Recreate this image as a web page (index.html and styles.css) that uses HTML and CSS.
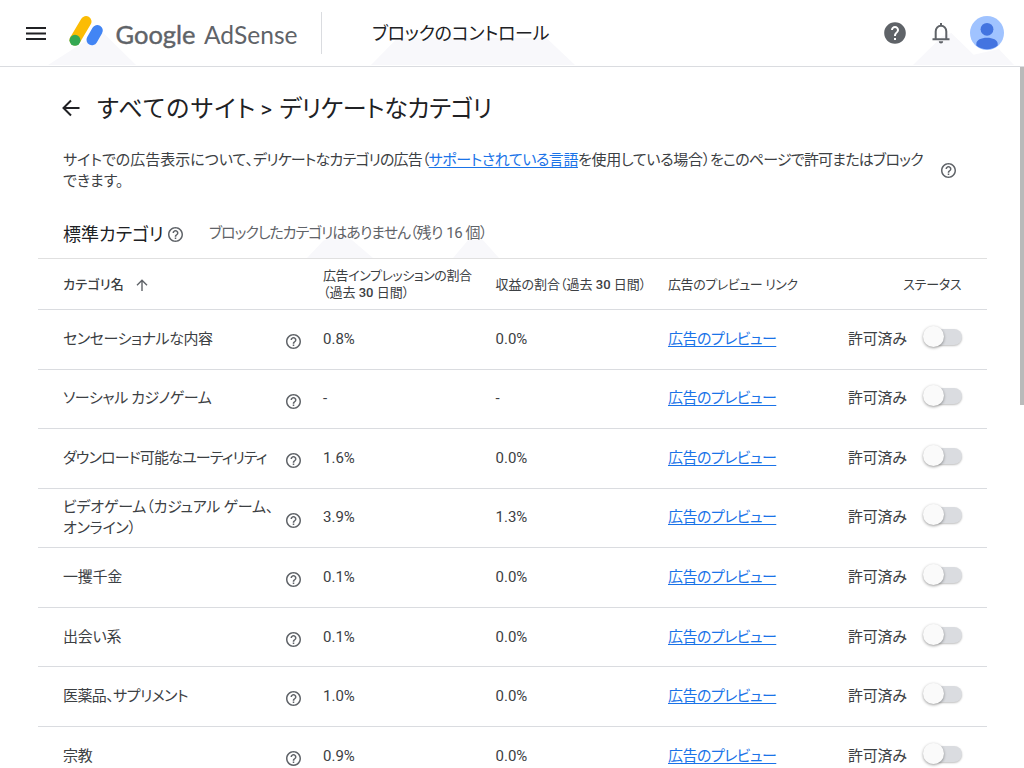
FILE: index.html
```html
<!DOCTYPE html>
<html lang="ja">
<head>
<meta charset="utf-8">
<title>Google AdSense</title>
<link rel="stylesheet" href="styles.css">
</head>
<body>
<svg class="defs" width="0" height="0">
  <symbol id="help" viewBox="2 2 20 20"><path d="M11 18h2v-2h-2v2zm1-16C6.480 2 2 6.480 2 12s4.480 10 10 10 10-4.480 10-10S17.520 2 12 2zm0 18c-4.410 0-8-3.590-8-8s3.590-8 8-8 8 3.590 8 8-3.590 8-8 8zm0-14c-2.210 0-4 1.790-4 4h2c0-1.100.9-2 2-2s2 .9 2 2c0 2-3 1.750-3 5h2c0-2.250 3-2.500 3-5 0-2.210-1.790-4-4-4z"/></symbol>
</svg>
<header class="top">
  <i class="haze h1"></i><i class="haze h2"></i><i class="haze h3"></i>
  <svg class="menu" width="20" height="14" viewBox="0 0 20 14"><path d="M0 1h20M0 6.500h20M0 12h20"/></svg>
  <svg class="logo" width="232" height="40" viewBox="0 0 232 40">
    <path d="M17 8.500L6 27" stroke="#fbbc04" stroke-width="11" stroke-linecap="round"/>
    <path d="M28.300 17.500L23 26.700" stroke="#4285f4" stroke-width="11" stroke-linecap="round"/>
    <circle cx="6" cy="27.300" r="5.500" fill="#34a853"/>
    <text class="brand strong" x="46.500" y="30.500" textLength="80" lengthAdjust="spacingAndGlyphs">Google</text>
    <text class="brand" x="135" y="30.500" textLength="93.500" lengthAdjust="spacingAndGlyphs">AdSense</text>
  </svg>
  <div class="product">ブロックのコントロール</div>
  <div class="actions">
    <svg width="22" height="22" viewBox="1 1 22 22" fill="#5f6368"><path d="M12 1.200C6 1.200 1.200 6 1.200 12S6 22.800 12 22.800 22.800 18 22.800 12 18 1.200 12 1.200zm1 17.800h-2v-2h2v2zm2.070-7.750l-.9.920C13.450 12.900 13 13.500 13 15h-2v-.5c0-1.100.450-2.100 1.170-2.830l1.240-1.260c.370-.360.590-.860.590-1.410 0-1.100-.9-2-2-2s-2 .9-2 2H8c0-2.210 1.790-4 4-4s4 1.790 4 4c0 .880-.360 1.680-.930 2.250z"/></svg>
    <svg class="bell" width="18" height="22" viewBox="0 0 18 22"><path d="M.5 17.200h17M3.700 17V9.500a5.300 5.800 0 0 1 10.600 0V17M9 1v3" fill="none" stroke="#5f6368" stroke-width="2"/><path d="M6.800 19.300h4.400a2.200 2.200 0 0 1-4.400 0z" fill="#5f6368"/></svg>
    <svg class="avatar" width="34" height="34" viewBox="0 0 34 34"><circle cx="17" cy="17" r="17" fill="#a0c3ff"/><circle cx="17" cy="13.300" r="6.400" fill="#4374e0"/><path d="M6.300 29.500V28c0-4 5-6.200 10.700-6.200S27.700 24 27.700 28v1.500A17 17 0 0 1 6.300 29.500z" fill="#4374e0"/></svg>
  </div>
</header>
<i class="scroll"></i>
<main>
  <div class="title">
    <svg width="18" height="18" viewBox="0 0 18 18"><path d="M17.500 9H2M9 1.500L1.500 9 9 16.500" fill="none" stroke="#202124" stroke-width="2"/></svg>
    <h1><span class="site">すべてのサイト</span><span class="gt">&gt;</span><span class="page">デリケートなカテゴリ</span></h1>
  </div>
  <div class="intro">
    <p>サイトでの広告表示について、<span class="i2">デリケートなカテゴリの広告（</span><a class="i3">サポートされている言語</a><span class="i4">を使用している場合）</span><span class="i5">をこのページで許可またはブロック</span><br>できます。</p>
    <svg class="q"><use href="#help"/></svg>
  </div>
  <div class="section">
    <i class="haze h4"></i><i class="haze h5"></i>
    <h2>標準カテゴリ</h2>
    <svg class="q"><use href="#help"/></svg>
    <span class="note"><span class="none">ブロックしたカテゴリはありません（</span><span class="left">残り 16 個）</span></span>
  </div>
  <div class="table">
    <div class="row head">
      <div class="sort"><b>カテゴリ名</b><svg width="12" height="12" viewBox="0 0 12 12"><path d="M6 12V1.500M1 6.300L6 1.300l5 5" fill="none" stroke="#5f6368" stroke-width="1.400"/></svg></div>
      <div></div>
      <div><span class="tight">広告インプレッションの割合</span><br>（過去 <b>30</b> 日間）</div>
      <div>収益の割合（過去 <b>30</b> 日間）</div>
      <div class="tight">広告のプレビュー リンク</div>
      <div></div>
      <div class="stat">ステータス</div>
    </div>
    <div class="row"><div class="n1">センセーショナルな内容</div><svg class="q"><use href="#help"/></svg><div>0.8%</div><div>0.0%</div><div><a class="link">広告のプレビュー</a></div><div class="ok">許可済み</div><i class="toggle"></i></div>
    <div class="row"><div class="n1">ソーシャル カジノゲーム</div><svg class="q"><use href="#help"/></svg><div>-</div><div>-</div><div><a class="link">広告のプレビュー</a></div><div class="ok">許可済み</div><i class="toggle"></i></div>
    <div class="row"><div class="n3">ダウンロード可能なユーティリティ</div><svg class="q"><use href="#help"/></svg><div>1.6%</div><div>0.0%</div><div><a class="link">広告のプレビュー</a></div><div class="ok">許可済み</div><i class="toggle"></i></div>
    <div class="row"><div class="n4">ビデオゲーム（カジュアル ゲーム、<br>オンライン）</div><svg class="q"><use href="#help"/></svg><div>3.9%</div><div>1.3%</div><div><a class="link">広告のプレビュー</a></div><div class="ok">許可済み</div><i class="toggle"></i></div>
    <div class="row"><div class="ok">一攫千金</div><svg class="q"><use href="#help"/></svg><div>0.1%</div><div>0.0%</div><div><a class="link">広告のプレビュー</a></div><div class="ok">許可済み</div><i class="toggle"></i></div>
    <div class="row"><div class="ok">出会い系</div><svg class="q"><use href="#help"/></svg><div>0.1%</div><div>0.0%</div><div><a class="link">広告のプレビュー</a></div><div class="ok">許可済み</div><i class="toggle"></i></div>
    <div class="row"><div class="n7">医薬品、サプリメント</div><svg class="q"><use href="#help"/></svg><div>1.0%</div><div>0.0%</div><div><a class="link">広告のプレビュー</a></div><div class="ok">許可済み</div><i class="toggle"></i></div>
    <div class="row"><div class="ok">宗教</div><svg class="q"><use href="#help"/></svg><div>0.9%</div><div>0.0%</div><div><a class="link">広告のプレビュー</a></div><div class="ok">許可済み</div><i class="toggle"></i></div>
  </div>
</main>
</body>
</html>
```
FILE: styles.css
```css
* { box-sizing: border-box; }
body {
  margin: 0;
  height: 768px;
  overflow: hidden;
  position: relative;
  background: #fff;
  color: #3c4043;
  font: 15px/21px Roboto, "Noto Sans CJK JP", sans-serif;
  font-feature-settings: "palt";
  white-space: nowrap;
}
svg { display: block; flex: none; }
.defs { position: absolute; }
a { color: #1a73e8; text-decoration: underline; text-underline-offset: 2px; }
b { font-weight: 500; }

.top {
  position: relative;
  display: flex;
  align-items: center;
  height: 67px;
  padding: 1px 20px 0 26px;
  border-bottom: 1px solid #dadce0;
}
.top > svg, .product, .actions { position: relative; }
.menu path { stroke: #202124; stroke-width: 2; }
.logo { margin: -1px 0 0 23px; }
.brand { font: 400 25.5px Lato, sans-serif; fill: #5f6368; }
.strong { stroke: #5f6368; stroke-width: .4px; }
.product {
  margin: -2px 0 0 20px;
  height: 42px;
  padding-left: 50px;
  border-left: 1px solid #dadce0;
  font-size: 18px;
  line-height: 44px;
  letter-spacing: -.25px;
  color: #202124;
}
.actions { display: flex; align-items: center; margin: -1px 0 0 auto; }
.bell { margin: 0 20px 0 26px; }
.haze { position: absolute; background: #f8f8fb; }
.h1 { left: 48px; top: 33px; width: 88px; height: 32px; clip-path: polygon(0 100%, 57% 0, 63% 0, 100% 100%); }
.h2 { left: 371px; top: 38px; width: 204px; height: 27px; clip-path: polygon(0 100%, 13% 0, 86% 0, 100% 100%); }
.h3 { left: 913px; top: 33px; width: 101px; height: 32px; clip-path: polygon(0 100%, 29% 10%, 38% 0, 60% 68%, 85% 50%, 100% 100%); }
.scroll { position: absolute; right: 0; top: 67px; width: 4px; height: 338px; background: #bababa; }

.title { display: flex; align-items: center; height: 40px; margin: 22px 0 0 62px; gap: 17px; }
.title svg { margin-top: -2px; }
h1 { margin: 0; font-size: 24px; font-weight: 400; color: #202124; }
.site { letter-spacing: 1.2px; }
.gt { display: inline-block; width: 23px; padding-left: 4px; font-size: 22px; }
.page { letter-spacing: -.4px; }
.intro { display: flex; height: 63px; margin: 21px 0 0 63px; }
.intro p { margin: 0; width: 878px; }
.i2 { letter-spacing: -.83px; }
.i3 { letter-spacing: -.45px; }
.i4 { letter-spacing: -.3px; }
.i5 { letter-spacing: -.8px; }
.q { width: 15px; height: 15px; fill: #5f6368; }
.intro .q { margin-top: 13px; }
.section { position: relative; display: flex; align-items: center; height: 45px; margin-left: 63px; padding-bottom: 3px; }
.section > :not(.haze) { position: relative; }
h2 { margin: 0; width: 105px; font-size: 18px; font-weight: 400; color: #202124; }
.note { margin: -2px 0 0 26px; color: #5f6368; }
.none { letter-spacing: -1.05px; }
.left { letter-spacing: -.45px; }
.h4 { left: 244px; top: 23px; width: 66px; height: 22px; clip-path: polygon(0 100%, 25% 20%, 45% 0, 65% 10%, 100% 100%); }
.h5 { left: 390px; top: 27px; width: 46px; height: 18px; clip-path: polygon(0 100%, 33% 0, 65% 0, 100% 100%); }

.table { width: 949px; margin-left: 37.5px; border-top: 1px solid #e0e0e0; }
.row {
  display: grid;
  grid-template-columns: 223px 37px 172.500px 172.500px 180px 74.500px 40px;
  align-items: center;
  height: 59.570px;
  padding: 0 0 0 25.500px;
  border-bottom: 1px solid #dadce0;
}
.row .q { margin-top: 4.5px; }
.head { height: 51px; font-size: 13px; line-height: 17px; }
.sort { display: flex; align-items: center; gap: 12px; padding-top: 1px; letter-spacing: .3px; }
.tight { letter-spacing: -.42px; }
.stat { justify-self: end; letter-spacing: -.2px; margin-right: 1px; }
.n1 { letter-spacing: -.45px; }
.n3 { letter-spacing: -.83px; }
.n4 { letter-spacing: -.22px; }
.n7 { letter-spacing: -.58px; }
.link { letter-spacing: -.55px; }
.ok { letter-spacing: -.25px; }
.toggle { position: relative; width: 40px; height: 22px; }
.toggle::before { content: ""; position: absolute; left: 6px; top: .5px; width: 33px; height: 16px; border-radius: 8px; background: #dadce0; box-shadow: 0 1px 2px rgba(0,0,0,.25); }
.toggle::after { content: ""; position: absolute; left: .5px; top: -2.5px; width: 21px; height: 21px; border-radius: 50%; background: #fafafa; box-shadow: 0 1px 3px rgba(0,0,0,.4); }
```
